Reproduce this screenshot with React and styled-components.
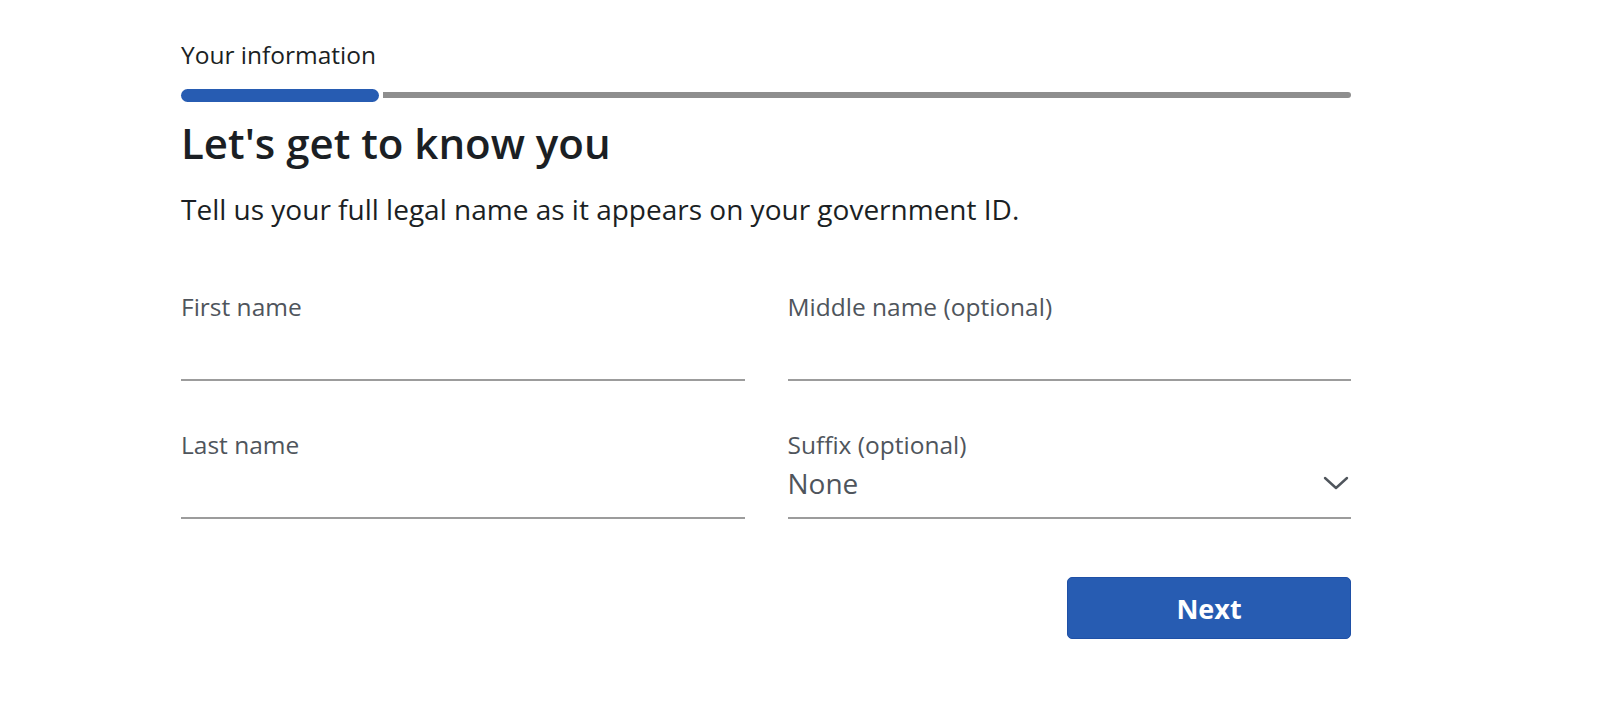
import React from 'react'
import styled, { createGlobalStyle } from 'styled-components'

const GlobalStyle = createGlobalStyle`
    body {
        margin: 0;
        background: #ffffff;
        font-family: "Open Sans", "Noto Sans", sans-serif;
    }
`

const Page = styled.main`
    padding: 40px 0 0 181px;
`

const Wrapper = styled.div`
    width: 1170px;
`

const StepTitle = styled.div`
    font-size: 24.5px;
    line-height: 30px;
    color: #1b1f24;
`

const Progress = styled.div`
    display: flex;
    align-items: center;
    gap: 4px;
    height: 14px;
    margin-top: 18px;
`

const ProgressDone = styled.div`
    width: 198px;
    height: 13px;
    border-radius: 7px;
    background: #275cb2;
`

const ProgressRest = styled.div`
    flex: 1;
    height: 6px;
    border-radius: 0 3px 3px 0;
    background: #8e8e8e;
`

const Heading = styled.h1`
    margin: 15px 0 0;
    font-size: 42px;
    line-height: 52px;
    font-weight: 600;
    color: #1b1f24;
`

const Intro = styled.p`
    margin: 22px 0 0;
    font-size: 28px;
    line-height: 36px;
    color: #1b1f24;
`

const FieldGrid = styled.div`
    display: grid;
    grid-template-columns: 1fr 1fr;
    column-gap: 43px;
    row-gap: 48px;
    margin-top: 64px;
`

const Field = styled.label`
    display: flex;
    flex-direction: column;
    border-bottom: 2px solid #9c9c9c;
`

const Label = styled.span`
    font-size: 24.5px;
    line-height: 32px;
    color: #4f555c;
`

const Input = styled.input`
    border: none;
    outline: none;
    padding: 0;
    height: 56px;
    font-family: inherit;
    font-size: 28px;
    color: #1b1f24;
    background: transparent;
`

const SelectBox = styled.div`
    display: flex;
    align-items: center;
    justify-content: space-between;
    box-sizing: border-box;
    height: 56px;
    padding: 4px 2px 16px 0;
    font-size: 28px;
    line-height: 36px;
    color: #4f555c;
`

const Actions = styled.div`
    display: flex;
    justify-content: flex-end;
    margin-top: 58px;
`

const NextButton = styled.button`
    width: 284px;
    height: 62px;
    border: 1px solid #1f50a6;
    border-radius: 5px;
    background: #275cb2;
    color: #ffffff;
    font-family: inherit;
    font-size: 27px;
    font-weight: 700;
    cursor: pointer;
`

function Chevron() {
    return (
        <svg width="26" height="16" viewBox="0 0 26 16" fill="none">
            <path d="M2 3 L13 13 L24 3" stroke="#4f555c" strokeWidth="2.4" strokeLinecap="round" strokeLinejoin="round" />
        </svg>
    )
}

export default function App() {
    return (
        <Page>
            <GlobalStyle />
            <Wrapper>
                <StepTitle>Your information</StepTitle>
                <Progress>
                    <ProgressDone />
                    <ProgressRest />
                </Progress>
                <Heading>Let's get to know you</Heading>
                <Intro>Tell us your full legal name as it appears on your government ID.</Intro>

                <FieldGrid>
                    <Field>
                        <Label>First name</Label>
                        <Input type="text" />
                    </Field>
                    <Field>
                        <Label>Middle name (optional)</Label>
                        <Input type="text" />
                    </Field>
                    <Field>
                        <Label>Last name</Label>
                        <Input type="text" />
                    </Field>
                    <Field>
                        <Label>Suffix (optional)</Label>
                        <SelectBox>
                            <span>None</span>
                            <Chevron />
                        </SelectBox>
                    </Field>
                </FieldGrid>

                <Actions>
                    <NextButton type="button">Next</NextButton>
                </Actions>
            </Wrapper>
        </Page>
    )
}
